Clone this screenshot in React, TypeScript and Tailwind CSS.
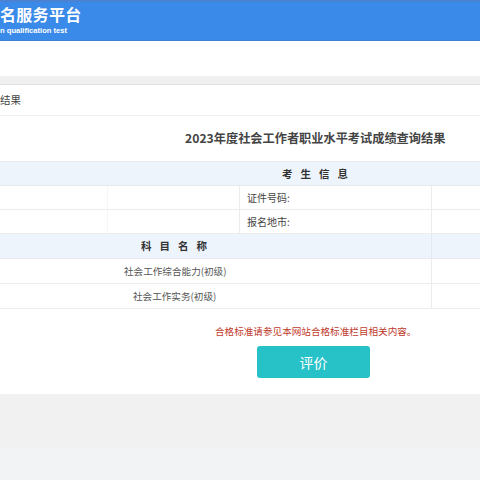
import React from 'react'

const cjk = { fontFamily: '"Noto Sans CJK SC", "Noto Sans", sans-serif' }

export default function App() {
  return (
    <div className="w-[480px] h-[480px] overflow-hidden bg-[#f2f2f3]" style={cjk}>
      {/* HEADER */}
      <div className="h-[41px] bg-[#3a8ae9] border-t-2 border-[#4c82d4] border-b border-b-[#3f7fd6] overflow-hidden">
        <div className="text-[16px] leading-[20px] pt-[2px] font-bold text-white tracking-[0.3px]">名服务平台</div>
        <div className="mt-[2px] text-[7.6px] leading-[10px] font-bold text-white" style={{ fontFamily: '"Liberation Sans", Arial, sans-serif' }}>
          n qualification test
        </div>
      </div>

      <div className="h-[35px] bg-white" />
      <div className="h-[9px] bg-[#f0f0f0] border-b border-[#e2e2e2]" />

      {/* PANEL */}
      <div className="bg-white pb-[16px]">
        <div className="h-[31px] flex items-center border-b border-[#f0f0f0]">
          <span className="text-[10.5px] text-[#444]">结果</span>
        </div>

        <div className="h-[45px] flex items-center pl-[185px]">
          <h1 className="text-[12.2px] font-bold text-[#444] whitespace-nowrap">2023年度社会工作者职业水平考试成绩查询结果</h1>
        </div>

        {/* TABLE */}
        <div className="text-[10px] text-[#444] border-t border-[#e8ecf1]">
          <div className="h-[24px] bg-[#edf4fc] flex items-center border-b border-[#e6eaef]">
            <span className="pl-[282px] font-bold text-[10.5px] tracking-[8px] text-[#333]">考生信息</span>
          </div>
          <div className="flex h-[24px] border-b border-[#ececec]">
            <div className="w-[108px] border-r border-[#f5f5f5]" />
            <div className="w-[132px] border-r border-[#ececec]" />
            <div className="w-[192px] border-r border-[#ececec] flex items-center pl-[7px]">证件号码:</div>
            <div className="flex-1" />
          </div>
          <div className="flex h-[24px] border-b border-[#ececec]">
            <div className="w-[108px] border-r border-[#f5f5f5]" />
            <div className="w-[132px] border-r border-[#ececec]" />
            <div className="w-[192px] border-r border-[#ececec] flex items-center pl-[7px]">报名地市:</div>
            <div className="flex-1" />
          </div>
          <div className="h-[25px] bg-[#edf4fc] flex border-b border-[#e6eaef]">
            <div className="w-[432px] border-r border-[#e3e8ee] flex items-center">
              <span className="pl-[141px] font-bold text-[10.5px] tracking-[8px] text-[#333]">科目名称</span>
            </div>
            <div className="flex-1" />
          </div>
          <div className="flex h-[25px] border-b border-[#ececec]">
            <div className="w-[432px] border-r border-[#ececec] flex items-center pl-[124px] text-[9.6px] text-[#555]">社会工作综合能力(初级)</div>
            <div className="flex-1" />
          </div>
          <div className="flex h-[25px] border-b border-[#ececec]">
            <div className="w-[432px] border-r border-[#ececec] flex items-center pl-[133px] text-[9.6px] text-[#555]">社会工作实务(初级)</div>
            <div className="flex-1" />
          </div>
        </div>

        <div className="pl-[215px] pt-[15px] text-[9.6px] text-[#c0392b] whitespace-nowrap leading-[14px]">
          合格标准请参见本网站合格标准栏目相关内容。
        </div>

        <div className="pl-[257px] pt-[8px]">
          <button className="w-[113px] h-[32px] rounded-[3px] bg-[#27c1c8] text-white text-[14px]">评价</button>
        </div>
      </div>

      <div className="h-[53px] bg-[#f1f1f2]" />
      <div className="bg-[#f2f3f5] h-[40px]" />
    </div>
  )
}
